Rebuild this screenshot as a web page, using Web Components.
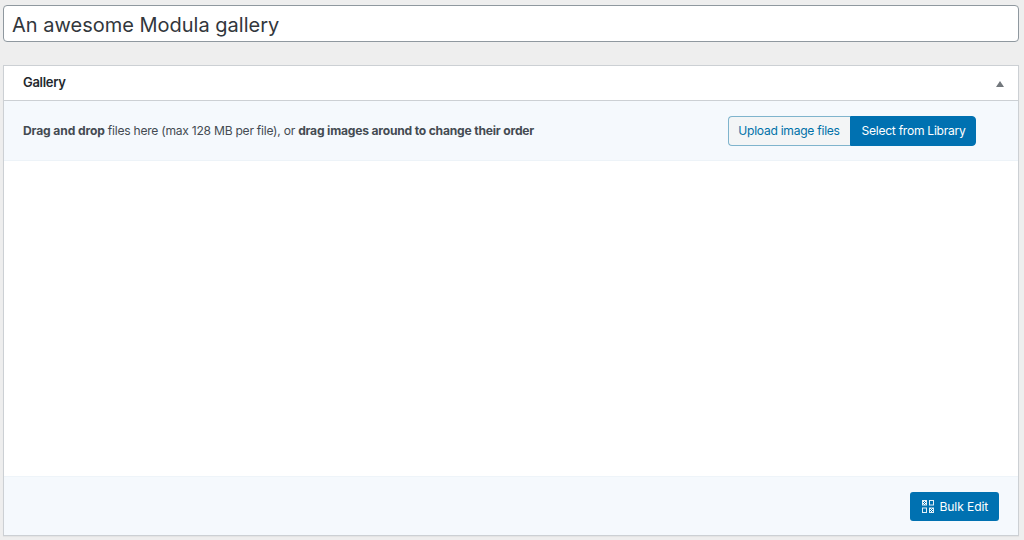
<!DOCTYPE html>
<html>
<head>
<meta charset="utf-8">
<title>Modula gallery</title>
<style>
  html,body{ margin:0; height:540px; overflow:hidden; background:#eeeeee; }
  body{ font-family:Inter,"Liberation Sans",sans-serif; color:#32373c; }
</style>
</head>
<body>
<edit-page>
  <title-input>An awesome Modula gallery</title-input>
  <meta-box heading="Gallery">
    <gallery-uploader slot="top">
      <span><b style="letter-spacing:-.13px">Drag and drop</b> files here (max 128 MB per file), or <b style="letter-spacing:-.2px">drag images around to change their order</b></span>
    </gallery-uploader>
    <box-footer slot="bottom"><wp-button>Bulk Edit</wp-button></box-footer>
  </meta-box>
</edit-page>

<script>
(function(){
  // small helper, every element is just a template + open shadow root
  function el(name, html){
    customElements.define(name, class extends HTMLElement {
      constructor(){
        super();
        this.attachShadow({mode:'open'}).innerHTML = typeof html === 'function' ? html(this) : html;
      }
    });
  }

  el('edit-page', `
    <style>
      :host{ display:flex; flex-direction:column; gap:23px; padding:5px 5px 0 3px; }
    </style>
    <slot></slot>
  `);

  el('title-input', `
    <style>
      :host{
        display:block; box-sizing:border-box; height:37px; padding:0 8px;
        background:#fff; border:1px solid #8f989f; border-radius:4px;
        font-size:20px; line-height:38px; color:#32373c;
      }
    </style>
    <slot></slot>
  `);

  el('meta-box', host => `
    <style>
      :host{
        display:flex; flex-direction:column; box-sizing:border-box; height:471px; margin-right:.5px;
        background:#fff; border:1px solid #ccd0d4; box-shadow:0 1px 1px rgba(0,0,0,.04);
      }
      header{
        flex:none; display:flex; align-items:center; justify-content:space-between;
        box-sizing:border-box; height:35px; padding:0 13.5px 0 19px;
        border-bottom:1px solid #ccd0d4;
        font-size:13px; font-weight:600; letter-spacing:-.3px; color:#23282d;
      }
      header span{ margin-top:-3px; }
      .arrow{ width:0; height:0; border:4px solid transparent; border-top:0; border-bottom:6px solid #72777c; margin-top:2px; }
      main{ flex:1; }
    </style>
    <header><span>${host.getAttribute('heading')}</span><i class="arrow"></i></header>
    <slot name="top"></slot>
    <main></main>
    <slot name="bottom"></slot>
  `);

  el('gallery-uploader', `
    <style>
      :host{
        display:flex; align-items:center; justify-content:space-between;
        box-sizing:border-box; height:60px; padding:0 42px 0 19px;
        background:#f5f9fd; border-bottom:1px solid #edf3f8;
        font-size:12.1px; letter-spacing:-.25px; color:#444b52;
      }
      ::slotted(span){ display:block; }
      .group{ display:flex; }
      .btn{
        box-sizing:border-box; height:30px; display:flex; align-items:center; justify-content:center;
        font-size:12.1px; letter-spacing:-.27px; border:1px solid #0071b1;
      }
      .up{ width:122px; color:#0071a8; background:#f3f5f6; border-radius:4px 0 0 4px; border-color:#7fb4cd; border-right:0; }
      .lib{ width:126px; padding-left:2px; color:#fff; background:#0071b1; border-radius:0 4px 4px 0; }
    </style>
    <slot></slot>
    <div class="group">
      <div class="btn up">Upload image files</div>
      <div class="btn lib">Select from Library</div>
    </div>
  `);

  el('box-footer', `
    <style>
      :host{
        display:flex; align-items:center; justify-content:flex-end;
        box-sizing:border-box; height:59px; padding:0 19px 0 0;
        background:#f5f9fd; border-top:1px solid #eef4f9;
      }
    </style>
    <slot></slot>
  `);

  el('wp-button', `
    <style>
      :host{
        display:flex; align-items:center; gap:6px; box-sizing:border-box;
        width:89px; height:29px; padding-left:12px;
        background:#0071b1; border-radius:3px; color:#fff; font-size:12.1px; letter-spacing:-.1px;
      }
      svg{ display:block; flex:none; }
    </style>
    <svg width="12" height="13" viewBox="0 0 12 13" fill="none">
      <defs>
        <pattern id="check" width="2" height="2" patternUnits="userSpaceOnUse">
          <rect width="1" height="1" fill="#fff"/><rect x="1" y="1" width="1" height="1" fill="#fff"/>
        </pattern>
      </defs>
      <rect x=".5" y=".5" width="4" height="4.5" fill="url(#check)" stroke="#e4eff6"/>
      <rect x="7.5" y=".5" width="4" height="4.5" stroke="#e4eff6"/>
      <rect x=".5" y="8" width="4" height="4.5" stroke="#e4eff6"/>
      <rect x="7.5" y="8" width="4" height="4.5" fill="url(#check)" stroke="#e4eff6"/>
    </svg>
    <slot></slot>
  `);
})();
</script>
</body>
</html>
